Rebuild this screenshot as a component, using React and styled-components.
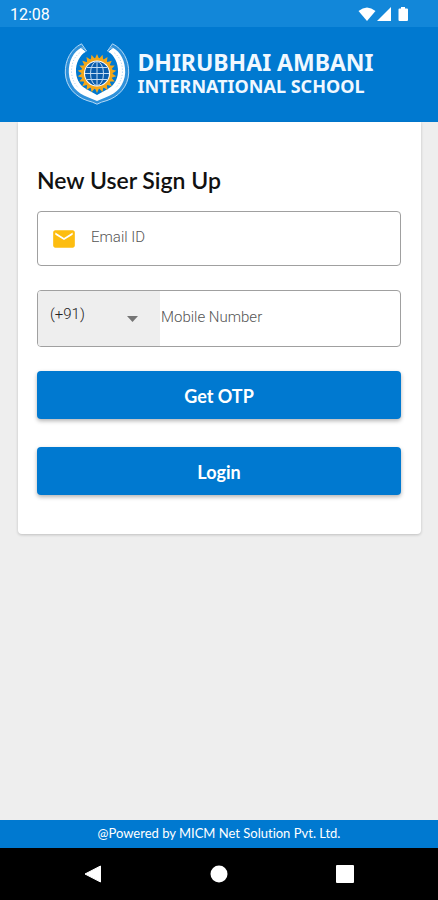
import React from 'react';
import styled, { createGlobalStyle } from 'styled-components';
import { MdEmail } from 'react-icons/md';

const colors = {
  primary: '#0079d0',
  statusBar: '#1287d9',
  page: '#eeeeee',
  amber: '#fdbd10',
  gear: '#f2a71b',
  globe: '#0a5cab',
};

const GlobalStyle = createGlobalStyle`
  * {
    box-sizing: border-box;
  }

  body {
    margin: 0;
    background: ${colors.page};
    font-family: Lato, "Open Sans", sans-serif;
    font-variant-ligatures: none;
  }
`;

const Screen = styled.div`
  display: flex;
  flex-direction: column;
  min-height: 100vh;
`;

const StatusBar = styled.div`
  display: flex;
  align-items: center;
  justify-content: space-between;
  height: 27px;
  padding: 2px 29px 0 10px;
  background: ${colors.statusBar};
  color: #fff;
`;

const Clock = styled.time`
  font-family: Roboto, sans-serif;
  font-size: 16px;
  line-height: 20px;
`;

const Header = styled.header`
  display: flex;
  align-items: center;
  justify-content: center;
  gap: 7px;
  height: 95px;
  padding-bottom: 2px;
  background: ${colors.primary};
`;

const SchoolName = styled.h1`
  display: flex;
  flex-direction: column;
  margin: 0;
  color: #f0f8ff;
  font-family: "Noto Sans", "Open Sans", sans-serif;
  font-weight: 700;
  white-space: nowrap;
`;

const NameLine = styled.span`
  font-size: ${({ $small }) => ($small ? '18px' : '23px')};
  line-height: 24px;
`;

const Main = styled.main`
  flex: 1;
  padding: 0 17px 24px 18px;
`;

const Card = styled.form`
  display: flex;
  flex-direction: column;
  padding: 41px 20px 39px 19px;
  background: #fff;
  border-radius: 0 0 4px 4px;
  box-shadow: 0 1px 3px rgba(0, 0, 0, 0.2);
`;

const Title = styled.h2`
  margin: 0 0 14px;
  color: #111;
  font-size: 23px;
  font-weight: 600;
  line-height: 34px;
`;

const Field = styled.div`
  display: flex;
  align-items: stretch;
  height: ${({ $height }) => $height}px;
  margin-bottom: 24px;
  border: 1px solid #a0a0a0;
  border-radius: 4px;
  overflow: hidden;
`;

const FieldIcon = styled.label`
  display: flex;
  align-items: center;
  padding: 0 14px 0 13px;
  color: ${colors.amber};
`;

const Input = styled.input`
  flex: 1;
  min-width: 0;
  padding: 0 8px 3px 0;
  border: 0;
  outline: 0;
  background: transparent;
  color: #333;
  font-family: Roboto, sans-serif;
  font-size: 15px;
  font-weight: 300;

  &::placeholder {
    color: #555;
    opacity: 1;
  }
`;

const CodePicker = styled.div`
  display: flex;
  align-items: center;
  width: 122px;
  margin-right: 1px;
  padding-right: 22px;
  background: ${colors.page};
`;

const CodeSelect = styled.select`
  flex: 1;
  min-width: 0;
  height: 100%;
  padding: 0 0 10px 12px;
  border: 0;
  outline: 0;
  appearance: none;
  background: transparent;
  color: #222;
  font-family: Roboto, sans-serif;
  font-size: 15px;
  font-weight: 300;
`;

const Button = styled.button`
  height: 48px;
  margin-bottom: ${({ $last }) => ($last ? '0' : '28px')};
  padding: 2px 0 0;
  border: 0;
  border-radius: 4px;
  background: ${colors.primary};
  box-shadow: 0 2px 4px rgba(0, 0, 0, 0.3);
  color: #fff;
  font-family: inherit;
  font-size: 18px;
  font-weight: 700;
  cursor: pointer;
`;

const Footer = styled.footer`
  height: 28px;
  background: ${colors.primary};
  color: #fff;
  font-size: 13px;
  line-height: 26px;
  text-align: center;
`;

const NavBar = styled.nav`
  display: flex;
  align-items: center;
  justify-content: space-around;
  height: 52px;
  padding: 0 30px;
  background: #000;
`;

const NavButton = styled.button`
  display: flex;
  padding: 0;
  border: 0;
  background: transparent;
  cursor: pointer;
`;

// Outline of a cog wheel centred on (cx, cy)
const gearPoints = (cx, cy, outer, inner, teeth) => {
  const points = [];
  for (let i = 0; i < teeth * 2; i += 1) {
    const r = i % 2 === 0 ? outer : inner;
    const a = (Math.PI * i) / teeth - Math.PI / 2;
    points.push(`${(cx + r * Math.cos(a)).toFixed(2)},${(cy + r * Math.sin(a)).toFixed(2)}`);
  }
  return points.join(' ');
};

const Emblem = () => (
  <svg width="66" height="62" viewBox="0 0 66 62" aria-hidden="true">
    {/* ribbon */}
    <path
      d="M17.5 .8C7 6 1 17 1.3 30C1.8 44 12 54 23 57.5Q29 59 33 61.2Q37 59 43 57.5C54 54 64.2 44 64.7 30C65 17 59 6 48.5 .8L43.5 8C52 12.5 56.5 20 56 29C55.5 39 50 45 43 48.5L33 53.8L23 48.5C16 45 10.5 39 10 29C9.5 20 14 12.5 22.5 8Z"
      fill="#2f91da"
      stroke="#b5d9f5"
      strokeWidth="1"
    />
    <path
      d="M18 4.2C9 9 4.6 18 4.8 29.5C5.4 42 13 50.5 24 54.2L33 58L42 54.2C53 50.5 60.6 42 61.2 29.5C61.4 18 57 9 48 4.2L44 8.2C50 12 54.5 20 54 29C53.5 38 49 43.5 42 47L33 52L24 47C17 43.5 12.5 38 12 29C11.5 20 16 12 22 8.2Z"
      fill="#fff"
    />
    <path d="M15.5 10C9 15 7.5 22 7.5 29C8 36 10.5 41 14.5 45M50.5 10C57 15 58.5 22 58.5 29C58 36 55.5 41 51.5 45" fill="none" stroke="#9bcbf0" strokeWidth="1" strokeDasharray="1 2" />
    <path d="M17 4.5L22 8.5M49 4.5L44 8.5" stroke="#2f91da" strokeWidth="1" />
    {/* cog and globe */}
    <polygon points={gearPoints(33, 30.5, 19.5, 15, 22)} fill={colors.gear} />
    <circle cx="33" cy="30.5" r="15.5" fill={colors.gear} />
    <circle cx="33" cy="30.5" r="13" fill="#fff" />
    <circle cx="33" cy="30.5" r="12" fill={colors.globe} />
    <g fill="none" stroke="#c3dcf2" strokeWidth="1">
      <path d="M33 18.5V42.5M21 30.5H45M23 24.5H43M23 36.5H43" />
      <ellipse cx="33" cy="30.5" rx="6.5" ry="12" />
    </g>
  </svg>
);

const StatusIcons = () => (
  <svg width="51" height="16" viewBox="0 0 51 16" fill="#fff" aria-hidden="true">
    <path d="M.5 4Q9 -3 17.5 4L9 14Z" />
    <path d="M33 0V14H19Z" />
    <path d="M43 0H47V1.5H49Q50 1.5 50 2.5V13Q50 14 49 14H41.5Q40.5 14 40.5 13V2.5Q40.5 1.5 41.5 1.5H43Z" />
  </svg>
);

const App = () => (
  <Screen>
    <GlobalStyle />
    <StatusBar>
      <Clock>12:08</Clock>
      <StatusIcons />
    </StatusBar>
    <Header>
      <Emblem />
      <SchoolName>
        <NameLine>DHIRUBHAI AMBANI</NameLine>
        <NameLine $small>INTERNATIONAL SCHOOL</NameLine>
      </SchoolName>
    </Header>
    <Main>
      <Card onSubmit={(e) => e.preventDefault()}>
        <Title>New User Sign Up</Title>
        <Field $height={55}>
          <FieldIcon htmlFor="email" aria-label="Email ID">
            <MdEmail size={26} />
          </FieldIcon>
          <Input id="email" type="email" placeholder="Email ID" />
        </Field>
        <Field $height={57}>
          <CodePicker>
            <CodeSelect aria-label="Country code" defaultValue="+91">
              <option value="+91">(+91)</option>
            </CodeSelect>
            <svg width="11" height="6" viewBox="0 0 11 6" aria-hidden="true">
              <path d="M0 0H11L5.5 6Z" fill="#757575" />
            </svg>
          </CodePicker>
          <Input type="tel" aria-label="Mobile Number" placeholder="Mobile Number" />
        </Field>
        <Button type="submit">Get OTP</Button>
        <Button type="button" $last>Login</Button>
      </Card>
    </Main>
    <Footer>@Powered by MICM Net Solution Pvt. Ltd.</Footer>
    <NavBar>
      <NavButton type="button" aria-label="Back">
        <svg width="18" height="18" viewBox="0 0 18 18"><path d="M16.5 1V17L1 9Z" fill="#fff" stroke="#fff" strokeLinejoin="round" /></svg>
      </NavButton>
      <NavButton type="button" aria-label="Home">
        <svg width="18" height="18" viewBox="0 0 18 18"><circle cx="9" cy="9" r="8.5" fill="#fff" /></svg>
      </NavButton>
      <NavButton type="button" aria-label="Recent apps">
        <svg width="18" height="18" viewBox="0 0 18 18"><rect width="18" height="18" rx="1" fill="#fff" /></svg>
      </NavButton>
    </NavBar>
  </Screen>
);

export default App;
